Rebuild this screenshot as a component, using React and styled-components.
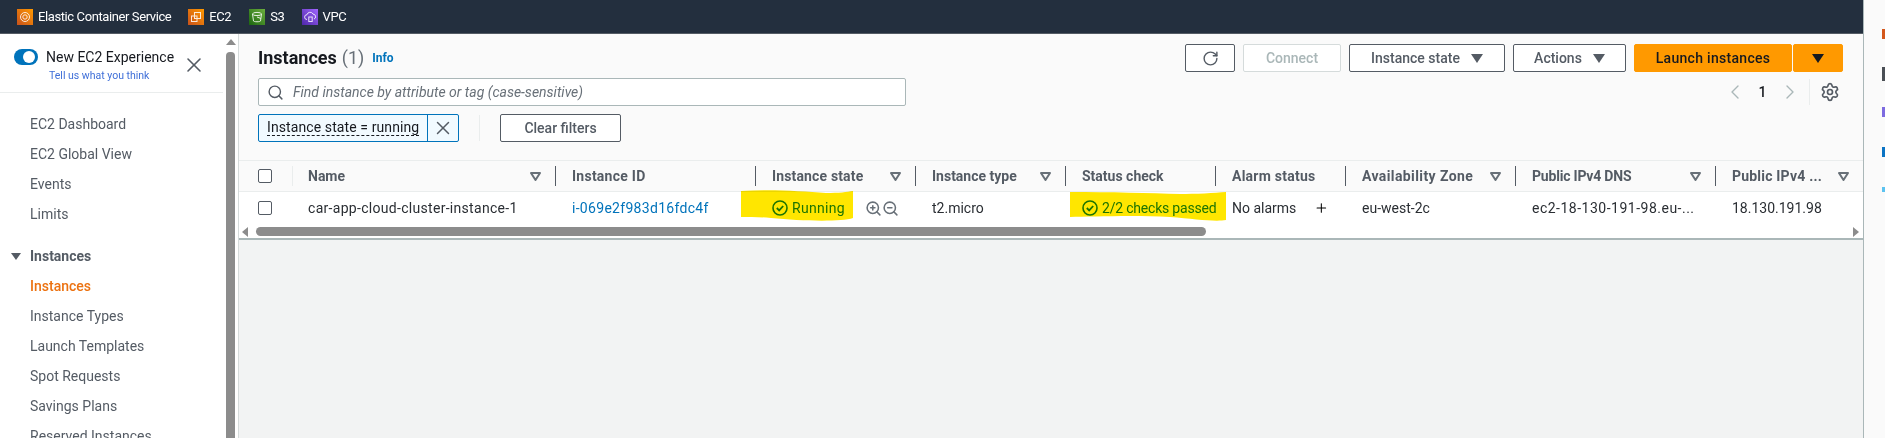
import styled, { createGlobalStyle } from 'styled-components'
import { RotateCw, Search, X, ZoomIn, ZoomOut, Settings, ChevronLeft, ChevronRight, Plus } from 'lucide-react'

const GlobalStyle = createGlobalStyle`
  html, body { margin: 0; padding: 0; background: #fff; }
  * { box-sizing: border-box; }
  body { font-family: Roboto, "Liberation Sans", sans-serif; font-size: 14px; color: #16191f; }
`

const Frame = styled.div`
  width: 1885px;
  height: 438px;
  display: flex;
  overflow: hidden;
`
const Shell = styled.div`
  width: 1864px;
  display: flex;
  flex-direction: column;
  border-right: 1px solid #aab7b8;
`
const TopBar = styled.div`
  height: 34px;
  flex: none;
  background: #232f3e;
  border-bottom: 1px solid #545b64;
  display: flex;
  align-items: center;
  padding-left: 17px;
`
const Service = styled.div`
  display: flex;
  align-items: center;
  gap: 5px;
  margin-right: ${p => p.$mr}px;
  color: #fff;
  font-size: 13px;
  letter-spacing: -0.4px;
  white-space: nowrap;
`
const ServiceBadge = styled.svg`
  width: 16px;
  height: 16px;
  display: block;
`
const Body = styled.div`
  flex: 1;
  display: flex;
  min-height: 0;
`
const Sidebar = styled.nav`
  width: 226px;
  flex: none;
  background: #fff;
  overflow: hidden;
`
const Experience = styled.div`
  width: 223px;
  height: 59px;
  border-bottom: 1px solid #eaeded;
  display: flex;
  padding: 15px 17px 0 14px;
  justify-content: space-between;
`
const ToggleRow = styled.div`
  display: flex;
  align-items: center;
  gap: 8px;
  height: 16px;
  font-size: 14px;
  color: #16191f;
  white-space: nowrap;
`
const Toggle = styled.span`
  width: 24px;
  height: 16px;
  border-radius: 8px;
  background: #0073bb;
  display: flex;
  justify-content: flex-end;
  align-items: center;
  padding-right: 3px;
  &::after {
    content: '';
    width: 12px;
    height: 12px;
    border-radius: 50%;
    background: #fff;
  }
`
const Feedback = styled.div`
  margin: 4px 0 0 35px;
  font-size: 10.5px;
  line-height: 14px;
  color: #3f6fd8;
  white-space: nowrap;
`
const CloseIcon = styled(X)`
  margin-top: 4px;
  color: #545b64;
`
const NavList = styled.div`
  margin-top: ${p => p.$mt}px;
`
const NavItem = styled.div`
  height: 30px;
  line-height: 30px;
  padding-left: 30px;
  font-size: 14px;
  white-space: nowrap;
  color: ${p => (p.$active ? '#ec7211' : '#545b64')};
  font-weight: ${p => (p.$active ? 500 : 400)};
`
const NavGroup = styled.div`
  height: 30px;
  display: flex;
  align-items: center;
  gap: 9px;
  padding-left: 11px;
  font-weight: 700;
  color: #545b64;
`
const Caret = styled.span`
  width: 0;
  height: 0;
  flex: none;
  border-left: ${p => p.$size}px solid transparent;
  border-right: ${p => p.$size}px solid transparent;
  border-top: ${p => p.$size * 1.5}px solid ${p => p.$color || '#545b64'};
`
const ScrollColumn = styled.div`
  width: 12px;
  flex: none;
  padding-right: 3px;
  background: #fff;
  display: flex;
  flex-direction: column;
  align-items: center;
`
const ScrollUp = styled.span`
  margin-top: 5px;
  width: 0;
  height: 0;
  border-left: 5px solid transparent;
  border-right: 5px solid transparent;
  border-bottom: 6px solid #8c8c8c;
`
const ScrollThumb = styled.div`
  margin-top: 7px;
  flex: 1;
  width: 9px;
  background: #8c8c8c;
  border-radius: 4px 4px 0 0;
`
const Main = styled.main`
  flex: 1;
  min-width: 0;
  background: #f2f3f3;
  border-left: 1px solid #d5dbdb;
  display: flex;
  flex-direction: column;
`
const Head = styled.header`
  height: 126px;
  flex: none;
  background: #fafafa;
  padding: 10px 20px 0 19px;
  display: flex;
  justify-content: space-between;
`
const HeadLeft = styled.div`
  display: flex;
  flex-direction: column;
`
const TitleRow = styled.div`
  height: 26px;
  display: flex;
  align-items: center;
  gap: 5px;
  white-space: nowrap;
`
const Title = styled.h1`
  margin: 0;
  font-size: 18px;
  font-weight: 700;
  color: #16191f;
`
const Count = styled.span`
  font-size: 18px;
  color: #687078;
`
const Info = styled.a`
  margin: 2px 0 0 3px;
  font-size: 12px;
  font-weight: 700;
  color: #0073bb;
`
const SearchBox = styled.div`
  margin-top: 8px;
  width: 648px;
  height: 28px;
  background: #fff;
  border: 1px solid #aab7b8;
  border-radius: 2px;
  display: flex;
  align-items: center;
  gap: 9px;
  padding-left: 8px;
  color: #545b64;
`
const Placeholder = styled.span`
  font-style: italic;
  color: #687078;
  white-space: nowrap;
`
const FilterRow = styled.div`
  margin-top: 8px;
  display: flex;
  align-items: center;
`
const Chip = styled.div`
  height: 28px;
  display: flex;
  border: 1px solid #0073bb;
  border-radius: 2px;
  background: #f1faff;
`
const ChipLabel = styled.span`
  width: 169px;
  padding-left: 8px;
  display: flex;
  align-items: center;
  border-right: 1px solid #0073bb;
  white-space: nowrap;
  color: #16191f;
  letter-spacing: 0.1px;
  & > span {
    border-bottom: 1px dashed #16191f;
    line-height: 15px;
  }
`
const ChipClose = styled.span`
  width: 30px;
  display: flex;
  align-items: center;
  justify-content: center;
  color: #545b64;
`
const FilterDivider = styled.span`
  width: 1px;
  height: 26px;
  background: #eaeded;
  margin: 0 20px 0 20px;
`
const Button = styled.button`
  width: ${p => p.$w}px;
  height: 28px;
  padding: 0;
  display: flex;
  align-items: center;
  justify-content: center;
  gap: ${p => p.$gap || 0}px;
  font: 500 14px Roboto, sans-serif;
  letter-spacing: ${p => (p.$primary ? 0.3 : 0)}px;
  border-radius: 2px;
  border: 1px solid ${p => (p.$primary ? '#ff9900' : p.$disabled ? '#d5dbdb' : '#545b64')};
  background: ${p => (p.$primary ? '#ff9900' : '#fff')};
  color: ${p => (p.$primary ? '#16191f' : p.$disabled ? '#aab7b8' : '#545b64')};
`
const HeadRight = styled.div`
  display: flex;
  flex-direction: column;
  align-items: flex-end;
`
const ButtonRow = styled.div`
  display: flex;
  gap: 8px;
`
const SplitButton = styled.div`
  display: flex;
  gap: 1px;
`
const Pager = styled.div`
  margin-top: 7px;
  height: 26px;
  display: flex;
  align-items: center;
  color: #aab7b8;
`
const PageNumber = styled.span`
  width: 31px;
  text-align: center;
  font-weight: 500;
  color: #16191f;
`
const PagerDivider = styled.span`
  width: 1px;
  height: 26px;
  background: #eaeded;
  margin: 0 10px 0 7px;
`
const GearIcon = styled(Settings)`
  color: #545b64;
  margin-right: 3px;
`
const Grid = styled.div`
  display: grid;
  grid-template-columns: 53px 263px 200px 160px 150px 150px 130px 170px 200px 1fr;
  align-items: center;
`
const TableHead = styled(Grid)`
  height: 32px;
  flex: none;
  background: #fafafa;
  border-top: 1px solid #eaeded;
  border-bottom: 1px solid #eaeded;
`
const TableRow = styled(Grid)`
  height: 34px;
  flex: none;
  background: #fff;
  padding-bottom: 2px;
`
const CheckCell = styled.div`
  padding-left: 19px;
  display: flex;
`
const Checkbox = styled.span`
  width: 14px;
  height: 14px;
  background: #fff;
  border: 1px solid #545b64;
  border-radius: 2px;
`
const HeadCell = styled.div`
  height: 20px;
  display: flex;
  align-items: center;
  justify-content: space-between;
  padding: 0 14px 0 ${p => (p.$soft ? 15 : 16)}px;
  font-weight: 700;
  color: #545b64;
  white-space: nowrap;
  letter-spacing: ${p => p.$spacing || 0}px;
  border-left: 1px solid ${p => (p.$soft ? '#eaeded' : '#545b64')};
`
const Cell = styled.div`
  position: relative;
  height: 32px;
  display: flex;
  align-items: center;
  padding: 0 16px 0 ${p => p.$pl || 17}px;
  white-space: nowrap;
  color: #2a2e33;
  letter-spacing: ${p => p.$spacing || 0}px;
`
const IdLink = styled.a`
  color: #0073bb;
`
const Status = styled.span`
  position: relative;
  z-index: 1;
  display: flex;
  align-items: center;
  gap: 4px;
  color: #1d8102;
  letter-spacing: ${p => p.$spacing}px;
`
const ZoomGroup = styled.span`
  margin-left: auto;
  display: flex;
  color: #687078;
`
const Marker = styled.svg`
  position: absolute;
  mix-blend-mode: multiply;
  pointer-events: none;
  z-index: 2;
  left: ${p => p.$left}px;
  top: -2px;
`
const CursorPlus = styled(Plus)`
  color: #000;
  margin-left: 18px;
`
const TableScroll = styled.div`
  height: 14px;
  flex: none;
  background: #fff;
  border-bottom: 2px solid #aab7b8;
  display: flex;
  align-items: center;
  padding: 0 4px 1px 3px;
`
const ArrowLeft = styled.span`
  width: 0;
  height: 0;
  border-top: 5px solid transparent;
  border-bottom: 5px solid transparent;
  border-right: 6px solid #8c8c8c;
`
const ArrowRight = styled(ArrowLeft)`
  margin-left: auto;
  border-right: 0;
  border-left: 6px solid #8c8c8c;
`
const TableThumb = styled.div`
  margin-left: 8px;
  width: 950px;
  height: 9px;
  background: #8c8c8c;
  border-radius: 5px;
`
const Strip = styled.aside`
  width: 21px;
  flex: none;
  background: #fafafa;
  display: flex;
  flex-direction: column;
  align-items: flex-end;
  padding-top: 29px;
`
const StripMark = styled.span`
  width: 3px;
  height: ${p => p.$h}px;
  margin-bottom: ${p => p.$mb}px;
  background: ${p => p.$color};
`

const services = [
  { name: 'Elastic Container Service', from: '#c8511b', to: '#ff9900', mr: 17, glyph: <g><circle cx="8" cy="8" r="4.5" /><circle cx="8" cy="8" r="2.2" /></g> },
  { name: 'EC2', from: '#c8511b', to: '#ff9900', mr: 18, glyph: <g><rect x="6.5" y="3.5" width="6" height="6" /><rect x="3.5" y="7" width="5.5" height="5.5" /></g> },
  { name: 'S3', from: '#1b660f', to: '#6cae3e', mr: 17, glyph: <g><ellipse cx="8" cy="5" rx="4.5" ry="1.6" /><path d="M3.5 5l1 7c.3 1 6.7 1 7 0l1-7M8 8l4 1.5" /></g> },
  { name: 'VPC', from: '#4d27a8', to: '#a166ff', mr: 0, glyph: <g><path d="M5 10.5a2.4 2.4 0 0 1 0-4.8 3.2 3.2 0 0 1 6-.6 2.6 2.6 0 0 1 1 5" /><rect x="6.8" y="8" width="3.4" height="4.5" /></g> },
]

const navTop = ['EC2 Dashboard', 'EC2 Global View', 'Events', 'Limits']
const navInstances = ['Instances', 'Instance Types', 'Launch Templates', 'Spot Requests', 'Savings Plans', 'Reserved Instances']

const FilterMark = () => (
  <svg width="11" height="9" viewBox="0 0 11 9">
    <path d="M1 1h9L5.5 8z" fill="#fafafa" stroke="#687078" strokeWidth="2" strokeLinejoin="round" />
  </svg>
)

const StatusCheck = () => (
  <svg width="16" height="16" viewBox="0 0 16 16" fill="none" stroke="#1d8102" strokeWidth="1.6">
    <circle cx="8" cy="8" r="7" />
    <path d="M4.8 8l2.4 2.4 4-4.4" strokeWidth="1.8" />
  </svg>
)

const columns = [
  { label: 'Name', filter: true, soft: true },
  { label: 'Instance ID', spacing: 0.25 },
  { label: 'Instance state', filter: true, spacing: 0.15 },
  { label: 'Instance type', filter: true },
  { label: 'Status check' },
  { label: 'Alarm status', spacing: 0.25 },
  { label: 'Availability Zone', filter: true, spacing: 0.4 },
  { label: 'Public IPv4 DNS', filter: true, spacing: -0.2 },
  { label: 'Public IPv4 ...', filter: true, spacing: 0.2 },
]

export default function App() {
  return (
    <Frame>
      <GlobalStyle />
      <Shell>
        <TopBar>
          {services.map(s => (
            <Service key={s.name} $mr={s.mr}>
              <ServiceBadge viewBox="0 0 16 16">
                <defs>
                  <linearGradient id={`grad-${s.name.length}-${s.to.slice(1)}`} x1="0" y1="1" x2="1" y2="0">
                    <stop offset="0" stopColor={s.from} />
                    <stop offset="1" stopColor={s.to} />
                  </linearGradient>
                </defs>
                <rect width="16" height="16" fill={`url(#grad-${s.name.length}-${s.to.slice(1)})`} />
                <g fill="none" stroke="#fff" strokeWidth="1" opacity="0.85">{s.glyph}</g>
              </ServiceBadge>
              {s.name}
            </Service>
          ))}
        </TopBar>
        <Body>
          <Sidebar>
            <Experience>
              <div>
                <ToggleRow><Toggle />New EC2 Experience</ToggleRow>
                <Feedback>Tell us what you think</Feedback>
              </div>
              <CloseIcon size={24} strokeWidth={1.6} />
            </Experience>
            <NavList $mt={16}>
              {navTop.map(n => <NavItem key={n}>{n}</NavItem>)}
            </NavList>
            <NavList $mt={12}>
              <NavGroup><Caret $size={5} />Instances</NavGroup>
              {navInstances.map((n, i) => <NavItem key={n} $active={i === 0}>{n}</NavItem>)}
            </NavList>
          </Sidebar>
          <ScrollColumn>
            <ScrollUp />
            <ScrollThumb />
          </ScrollColumn>
          <Main>
            <Head>
              <HeadLeft>
                <TitleRow>
                  <Title>Instances</Title>
                  <Count>(1)</Count>
                  <Info>Info</Info>
                </TitleRow>
                <SearchBox>
                  <Search size={17} strokeWidth={2} />
                  <Placeholder>Find instance by attribute or tag (case-sensitive)</Placeholder>
                </SearchBox>
                <FilterRow>
                  <Chip>
                    <ChipLabel><span>Instance state = running</span></ChipLabel>
                    <ChipClose><X size={22} strokeWidth={1.6} /></ChipClose>
                  </Chip>
                  <FilterDivider />
                  <Button $w={121}>Clear filters</Button>
                </FilterRow>
              </HeadLeft>
              <HeadRight>
                <ButtonRow>
                  <Button $w={50}><RotateCw size={17} strokeWidth={2} /></Button>
                  <Button $w={98} $disabled>Connect</Button>
                  <Button $w={156} $gap={11}>Instance state <Caret $size={6} /></Button>
                  <Button $w={113} $gap={11}>Actions <Caret $size={6} /></Button>
                  <SplitButton>
                    <Button $w={158} $primary>Launch instances</Button>
                    <Button $w={50} $primary><Caret $size={6} $color="#16191f" /></Button>
                  </SplitButton>
                </ButtonRow>
                <Pager>
                  <ChevronLeft size={24} strokeWidth={1.4} />
                  <PageNumber>1</PageNumber>
                  <ChevronRight size={24} strokeWidth={1.4} />
                  <PagerDivider />
                  <GearIcon size={20} strokeWidth={2} />
                </Pager>
              </HeadRight>
            </Head>
            <TableHead>
              <CheckCell><Checkbox /></CheckCell>
              {columns.map(c => (
                <HeadCell key={c.label} $soft={c.soft} $spacing={c.spacing}>
                  {c.label}
                  {c.filter && <FilterMark />}
                </HeadCell>
              ))}
            </TableHead>
            <TableRow>
              <CheckCell><Checkbox /></CheckCell>
              <Cell $pl={16} $spacing={0.3}>car-app-cloud-cluster-instance-1</Cell>
              <Cell $spacing={0.3}><IdLink>i-069e2f983d16fdc4f</IdLink></Cell>
              <Cell>
                <Marker $left={-14} width="113" height="32" viewBox="0 0 113 32">
                  <path d="M0 1C30-1 60 1 85 3 98 3 106 2 112 1V28C100 32 60 31 30 28 20 27 8 27 0 27z" fill="#ffe600" />
                </Marker>
                <Status $spacing={0.3}><StatusCheck />Running</Status>
                <ZoomGroup><ZoomIn size={17} strokeWidth={2.2} /><ZoomOut size={17} strokeWidth={2.2} /></ZoomGroup>
              </Cell>
              <Cell>t2.micro</Cell>
              <Cell>
                <Marker $left={5} width="157" height="32" viewBox="0 0 157 32">
                  <path d="M0 2C40 2 80 3 110 4 125 4 145 3 156 2V30C145 32 125 29 100 27 60 25 20 27 0 27z" fill="#ffe600" />
                </Marker>
                <Status $spacing={-0.2}><StatusCheck />2/2 checks passed</Status>
              </Cell>
              <Cell>No alarms<CursorPlus size={24} strokeWidth={1.7} /></Cell>
              <Cell>eu-west-2c</Cell>
              <Cell $spacing={0.5}>ec2-18-130-191-98.eu-...</Cell>
              <Cell>18.130.191.98</Cell>
            </TableRow>
            <TableScroll>
              <ArrowLeft />
              <TableThumb />
              <ArrowRight />
            </TableScroll>
          </Main>
        </Body>
      </Shell>
      <Strip>
        <StripMark $h={10} $mb={28} $color="#d4581c" />
        <StripMark $h={14} $mb={26} $color="#4a4f55" />
        <StripMark $h={10} $mb={30} $color="#7d6be0" />
        <StripMark $h={10} $mb={30} $color="#0b74c4" />
        <StripMark $h={5} $mb={0} $color="#5cc3f0" />
      </Strip>
    </Frame>
  )
}
